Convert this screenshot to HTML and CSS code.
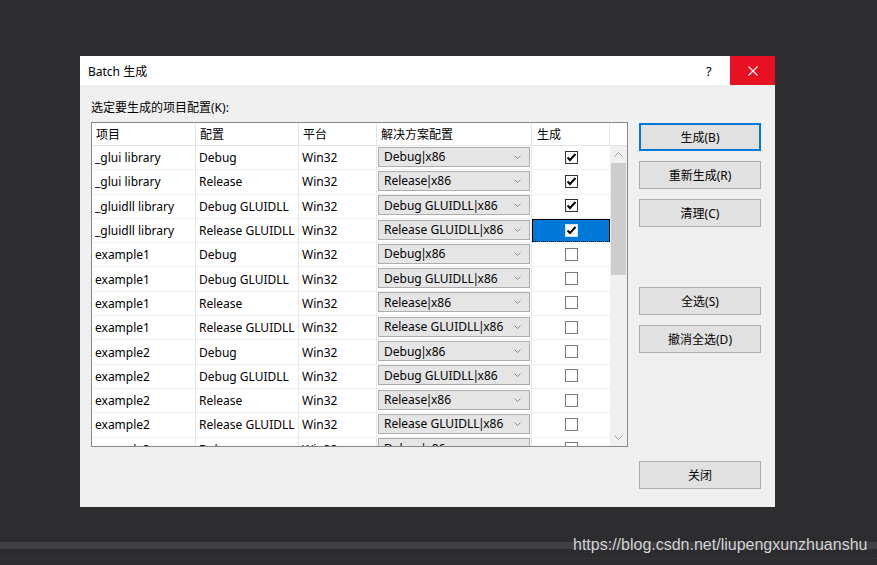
FILE: index.html
```html
<!DOCTYPE html>
<html>
<head>
<meta charset="utf-8">
<link rel="stylesheet" href="styles.css">
</head>
<body>
<div class="screen">
  <div class="dialog">
    <div class="titlebar">
      <span class="title">Batch 生成</span>
      <span class="help">?</span>
      <span class="close"><svg width="10" height="10" viewBox="0 0 10 10"><path d="M0.5 0.5 L9.5 9.5 M9.5 0.5 L0.5 9.5" stroke="#fff" stroke-width="1.1" fill="none"/></svg></span>
    </div>
    <div class="content">
      <div class="left">
        <div class="label">选定要生成的项目配置(K):</div>
        <div class="grid">
          <div class="row head">
            <div class="c c1">项目</div>
            <div class="c c2">配置</div>
            <div class="c c3">平台</div>
            <div class="c c4">解决方案配置</div>
            <div class="c c5">生成</div>
            <div class="c cs"></div>
          </div>
          <div class="body">
            <div class="rows">
              <div class="row"><div class="c c1">_glui library</div><div class="c c2">Debug</div><div class="c c3">Win32</div><div class="c c4"><div class="combo"><span class="val">Debug<span class="bar">|</span>x86</span><svg class="chev" width="7" height="4" viewBox="0 0 7 4"><path d="M0.5 0.5 L3.5 3.5 L6.5 0.5" stroke="#8a8a8a" fill="none"/></svg></div></div><div class="c c5"><span class="chk on"><svg width="11" height="11" viewBox="0 0 11 11"><path d="M1.5 5.5 L4 8 L9.5 2" stroke="#000" stroke-width="2" fill="none"/></svg></span></div></div>
              <div class="row"><div class="c c1">_glui library</div><div class="c c2">Release</div><div class="c c3">Win32</div><div class="c c4"><div class="combo"><span class="val">Release<span class="bar">|</span>x86</span><svg class="chev" width="7" height="4" viewBox="0 0 7 4"><path d="M0.5 0.5 L3.5 3.5 L6.5 0.5" stroke="#8a8a8a" fill="none"/></svg></div></div><div class="c c5"><span class="chk on"><svg width="11" height="11" viewBox="0 0 11 11"><path d="M1.5 5.5 L4 8 L9.5 2" stroke="#000" stroke-width="2" fill="none"/></svg></span></div></div>
              <div class="row"><div class="c c1">_gluidll library</div><div class="c c2">Debug GLUIDLL</div><div class="c c3">Win32</div><div class="c c4"><div class="combo"><span class="val">Debug GLUIDLL<span class="bar">|</span>x86</span><svg class="chev" width="7" height="4" viewBox="0 0 7 4"><path d="M0.5 0.5 L3.5 3.5 L6.5 0.5" stroke="#8a8a8a" fill="none"/></svg></div></div><div class="c c5"><span class="chk on"><svg width="11" height="11" viewBox="0 0 11 11"><path d="M1.5 5.5 L4 8 L9.5 2" stroke="#000" stroke-width="2" fill="none"/></svg></span></div></div>
              <div class="row"><div class="c c1">_gluidll library</div><div class="c c2">Release GLUIDLL</div><div class="c c3">Win32</div><div class="c c4"><div class="combo"><span class="val">Release GLUIDLL<span class="bar">|</span>x86</span><svg class="chev" width="7" height="4" viewBox="0 0 7 4"><path d="M0.5 0.5 L3.5 3.5 L6.5 0.5" stroke="#8a8a8a" fill="none"/></svg></div></div><div class="c c5 sel"><span class="chk on selchk"><svg width="11" height="11" viewBox="0 0 11 11"><path d="M1.5 5.5 L4 8 L9.5 2" stroke="#000" stroke-width="2" fill="none"/></svg></span></div></div>
              <div class="row"><div class="c c1">example1</div><div class="c c2">Debug</div><div class="c c3">Win32</div><div class="c c4"><div class="combo"><span class="val">Debug<span class="bar">|</span>x86</span><svg class="chev" width="7" height="4" viewBox="0 0 7 4"><path d="M0.5 0.5 L3.5 3.5 L6.5 0.5" stroke="#8a8a8a" fill="none"/></svg></div></div><div class="c c5"><span class="chk"></span></div></div>
              <div class="row"><div class="c c1">example1</div><div class="c c2">Debug GLUIDLL</div><div class="c c3">Win32</div><div class="c c4"><div class="combo"><span class="val">Debug GLUIDLL<span class="bar">|</span>x86</span><svg class="chev" width="7" height="4" viewBox="0 0 7 4"><path d="M0.5 0.5 L3.5 3.5 L6.5 0.5" stroke="#8a8a8a" fill="none"/></svg></div></div><div class="c c5"><span class="chk"></span></div></div>
              <div class="row"><div class="c c1">example1</div><div class="c c2">Release</div><div class="c c3">Win32</div><div class="c c4"><div class="combo"><span class="val">Release<span class="bar">|</span>x86</span><svg class="chev" width="7" height="4" viewBox="0 0 7 4"><path d="M0.5 0.5 L3.5 3.5 L6.5 0.5" stroke="#8a8a8a" fill="none"/></svg></div></div><div class="c c5"><span class="chk"></span></div></div>
              <div class="row"><div class="c c1">example1</div><div class="c c2">Release GLUIDLL</div><div class="c c3">Win32</div><div class="c c4"><div class="combo"><span class="val">Release GLUIDLL<span class="bar">|</span>x86</span><svg class="chev" width="7" height="4" viewBox="0 0 7 4"><path d="M0.5 0.5 L3.5 3.5 L6.5 0.5" stroke="#8a8a8a" fill="none"/></svg></div></div><div class="c c5"><span class="chk"></span></div></div>
              <div class="row"><div class="c c1">example2</div><div class="c c2">Debug</div><div class="c c3">Win32</div><div class="c c4"><div class="combo"><span class="val">Debug<span class="bar">|</span>x86</span><svg class="chev" width="7" height="4" viewBox="0 0 7 4"><path d="M0.5 0.5 L3.5 3.5 L6.5 0.5" stroke="#8a8a8a" fill="none"/></svg></div></div><div class="c c5"><span class="chk"></span></div></div>
              <div class="row"><div class="c c1">example2</div><div class="c c2">Debug GLUIDLL</div><div class="c c3">Win32</div><div class="c c4"><div class="combo"><span class="val">Debug GLUIDLL<span class="bar">|</span>x86</span><svg class="chev" width="7" height="4" viewBox="0 0 7 4"><path d="M0.5 0.5 L3.5 3.5 L6.5 0.5" stroke="#8a8a8a" fill="none"/></svg></div></div><div class="c c5"><span class="chk"></span></div></div>
              <div class="row"><div class="c c1">example2</div><div class="c c2">Release</div><div class="c c3">Win32</div><div class="c c4"><div class="combo"><span class="val">Release<span class="bar">|</span>x86</span><svg class="chev" width="7" height="4" viewBox="0 0 7 4"><path d="M0.5 0.5 L3.5 3.5 L6.5 0.5" stroke="#8a8a8a" fill="none"/></svg></div></div><div class="c c5"><span class="chk"></span></div></div>
              <div class="row"><div class="c c1">example2</div><div class="c c2">Release GLUIDLL</div><div class="c c3">Win32</div><div class="c c4"><div class="combo"><span class="val">Release GLUIDLL<span class="bar">|</span>x86</span><svg class="chev" width="7" height="4" viewBox="0 0 7 4"><path d="M0.5 0.5 L3.5 3.5 L6.5 0.5" stroke="#8a8a8a" fill="none"/></svg></div></div><div class="c c5"><span class="chk"></span></div></div>
              <div class="row"><div class="c c1">example3</div><div class="c c2">Debug</div><div class="c c3">Win32</div><div class="c c4"><div class="combo"><span class="val">Debug<span class="bar">|</span>x86</span><svg class="chev" width="7" height="4" viewBox="0 0 7 4"><path d="M0.5 0.5 L3.5 3.5 L6.5 0.5" stroke="#8a8a8a" fill="none"/></svg></div></div><div class="c c5"><span class="chk"></span></div></div>
            </div>
            <div class="vscroll">
              <div class="arrow"><svg width="9" height="5" viewBox="0 0 9 5"><path d="M0.5 4.5 L4.5 0.5 L8.5 4.5" stroke="#a6a6a6" fill="none"/></svg></div>
              <div class="track"><div class="thumb"></div></div>
              <div class="arrow"><svg width="9" height="5" viewBox="0 0 9 5"><path d="M0.5 0.5 L4.5 4.5 L8.5 0.5" stroke="#a6a6a6" fill="none"/></svg></div>
            </div>
          </div>
        </div>
      </div>
      <div class="buttons">
        <div class="btn default">生成(B)</div>
        <div class="btn">重新生成(R)</div>
        <div class="btn">清理(C)</div>
        <div class="btn gap1">全选(S)</div>
        <div class="btn">撤消全选(D)</div>
        <div class="btn gap2">关闭</div>
      </div>
    </div>
  </div>
  <div class="taskbar"></div>
  <div class="dots"></div>
  <div class="watermark">https://blog.csdn.net/liupengxunzhuanshu</div>
</div>
</body>
</html>
```

FILE: styles.css
```css
* { box-sizing: border-box; }
html, body { margin: 0; padding: 0; }
body {
  background: #2d2d30;
  font-family: "Noto Sans", "Noto Sans CJK SC", sans-serif;
  font-size: 12px;
  color: #000;
}
.screen {
  position: relative;
  width: 877px;
  height: 565px;
  padding-top: 56px;
  overflow: hidden;
}
.dialog {
  margin-left: 80px;
  width: 695px;
  height: 451px;
  background: #f0f0f0;
  display: flex;
  flex-direction: column;
}
.titlebar {
  height: 29px;
  background: #fff;
  display: flex;
  align-items: center;
}
.title { padding-left: 8px; flex: 1; }
.help { width: 24px; font-size: 13px; }
.close {
  width: 45px;
  height: 29px;
  background: #e81123;
  display: flex;
  align-items: center;
  justify-content: center;
}
.content {
  flex: 1;
  display: flex;
  padding: 15px 0 0 11px;
}
.left { width: 537px; }
.label { height: 16px; line-height: 16px; margin-bottom: 6px; }
.grid {
  width: 537px;
  height: 325px;
  border: 1px solid #828790;
  background: #fff;
  display: flex;
  flex-direction: column;
  overflow: hidden;
}
.row {
  display: flex;
  height: 24.3px;
  border-bottom: 1px solid #f0f0f0;
  flex: none;
}
.row.head { height: 23px; border-bottom: 1px solid #e5e5e5; }
.c {
  height: 100%;
  display: flex;
  align-items: center;
  padding-left: 3px;
  white-space: nowrap;
  overflow: hidden;
  border-right: 1px solid #e8e8e8;
}
.head .c { padding-left: 4px; border-right-color: #e5e5e5; }
.c1 { width: 104px; }
.c2 { width: 103px; }
.c3 { width: 78px; }
.c4 { width: 155px; padding-left: 1px; }
.c5 { width: 78px; border-right: none; justify-content: center; padding-left: 0; }
.head .c5 { justify-content: flex-start; padding-left: 5px; border-right: 1px solid #e5e5e5; }
.cs { width: 17px; border-right: none; background: #fff; }
.body { flex: 1; display: flex; overflow: hidden; }
.rows { width: 518px; overflow: hidden; }
.combo {
  width: 152px;
  height: 20px;
  margin-top: -2px;
  border: 1px solid #adadad;
  background: #e5e5e5;
  display: flex;
  align-items: center;
  padding-left: 5px;
  padding-right: 8px;
}
.val { flex: 1; }
.bar { margin: 0 -1.5px; }
.chev { flex: none; }
.chk {
  width: 13px;
  height: 13px;
  border: 1px solid #333;
  background: #fff;
  display: flex;
  align-items: center;
  justify-content: center;
  margin-top: -1px;
}
.chk:not(.on) { border-color: #7a7a7a; }
.sel {
  background: #0078d7;
  border: 1px solid #000;
  border-bottom: 1px dotted #000;
}
.selchk { border-color: #cfe4f8; }
.vscroll {
  width: 17px;
  display: flex;
  flex-direction: column;
  background: #f0f0f0;
}
.arrow {
  height: 17px;
  display: flex;
  align-items: center;
  justify-content: center;
}
.track { flex: 1; padding: 0 1px; }
.thumb { height: 112px; background: #cdcdcd; }
.buttons {
  width: 122px;
  margin-left: 11px;
  padding-top: 23px;
  display: flex;
  flex-direction: column;
}
.btn {
  height: 28px;
  margin-bottom: 10px;
  background: #e1e1e1;
  border: 1px solid #adadad;
  display: flex;
  align-items: center;
  justify-content: center;
  flex: none;
}
.btn.default { border: 2px solid #0078d7; }
.btn.gap1 { margin-top: 50px; }
.btn.gap2 { margin-top: 98px; }
.taskbar {
  margin-top: 35px;
  height: 7px;
  background: #3f3f46;
}
.dots {
  margin-top: 9px;
  height: 1px;
  border-top: 1px dotted #3a3a3e;
}
.watermark {
  position: absolute;
  left: 573px;
  top: 536px;
  font-family: "Liberation Sans", sans-serif;
  font-size: 16px;
  color: #d6d6d6;
  text-shadow: 0 0 2px #222;
}
```
